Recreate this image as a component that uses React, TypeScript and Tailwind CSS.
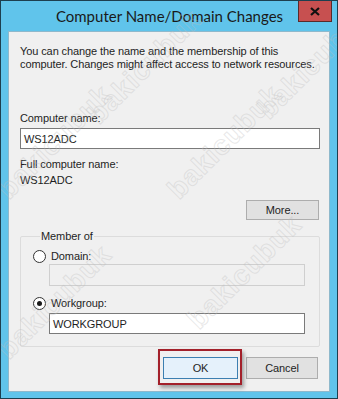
import React from "react";

const font = "font-['Liberation_Sans',Arial,sans-serif]";

function Radio({ checked }: { checked?: boolean }) {
  return (
    <span className="w-[13px] h-[13px] rounded-full border border-[#333] bg-white flex items-center justify-center shrink-0">
      {checked && <span className="w-[5px] h-[5px] rounded-full bg-[#1a1a1a]" />}
    </span>
  );
}

function Watermark({ className }: { className: string }) {
  return (
    <span
      className={
        "absolute text-[28px] font-bold tracking-[1px] text-transparent [-webkit-text-stroke:1px_rgba(190,190,190,0.35)] -rotate-45 pointer-events-none select-none font-['Liberation_Sans',sans-serif] " +
        className
      }
    >
      bakicubuk
    </span>
  );
}

export default function App() {
  return (
    <div className={`w-[338px] h-[399px] bg-[#60c4eb] border border-[#1d3f4f] flex flex-col relative overflow-hidden ${font}`}>
      <div className="h-[30px] pt-[1px] flex items-center justify-center text-[15px] font-['Lato',sans-serif] text-[#1a1a1a] pl-[1px]">
        Computer Name/Domain Changes
      </div>
      <button className="absolute top-0 right-[5px] w-[34px] h-[21px] bg-[#c75050] border border-[#5a2a2a] border-t-0 flex items-center justify-center">
        <svg width="10" height="9" viewBox="0 0 10 9">
          <path d="M1 1 L9 8 M9 1 L1 8" stroke="#111" strokeWidth="2.2" />
        </svg>
      </button>
      <div className="mx-[7px] mb-[6px] flex-1 bg-[#f0f0f0] border border-[#8fb9cc] pl-[11px] pr-[9px] flex flex-col text-[11px] tracking-[-0.1px] leading-[14px] text-[#1e1e1e]">
        <p className="mt-[13px] leading-[13px] whitespace-nowrap">
          You can change the name and the membership of this
          <br />
          computer. Changes might affect access to network resources.
        </p>
        <div className="mt-[40px]">Computer name:</div>
        <div className="mt-[3px] h-[21px] border border-[#7a7a7a] bg-white flex items-center px-[3px]">WS12ADC</div>
        <div className="mt-[8px]">Full computer name:</div>
        <div className="mt-[2px]">WS12ADC</div>
        <div className="flex justify-end mt-[13px] pr-[1px]">
          <button className="w-[73px] h-[20px] bg-[#e1e1e1] border border-[#adadad] leading-[14px] text-[#1e1e1e]">More...</button>
        </div>
        <fieldset className="mt-[9px] border border-[#dcdcdc] rounded-[2px] pl-[12px] pr-[14px] pb-[12px]">
          <legend className="ml-[7px] px-[1px] leading-[14px]">Member of</legend>
          <div className="mt-[6px] flex items-center gap-[5px] h-[14px]">
            <Radio />
            <span>Domain:</span>
          </div>
          <div className="mt-[1px] ml-[16px] h-[22px] border border-[#cfcfcf] bg-[#f0f0f0]" />
          <div className="mt-[10px] flex items-center gap-[5px] h-[14px]">
            <Radio checked />
            <span>Workgroup:</span>
          </div>
          <div className="mt-[3px] ml-[16px] h-[21px] border border-[#7a7a7a] bg-white flex items-center px-[3px]">WORKGROUP</div>
        </fieldset>
        <div className="mt-[10px] flex justify-end gap-[8px] pr-[2px]">
          <div className="relative">
            <button className="w-[75px] h-[22px] bg-[#e5f1fb] border border-[#3c7fb1] leading-[14px] text-[#1e1e1e]">OK</button>
            <span className="absolute left-[-5px] top-[-8px] w-[84px] h-[36px] border-2 border-[#a3202a] shadow-[2px_3px_4px_rgba(0,0,0,0.35)] pointer-events-none" />
          </div>
          <button className="w-[72px] h-[22px] bg-[#e1e1e1] border border-[#adadad] leading-[14px] text-[#1e1e1e]">Cancel</button>
        </div>
      </div>
      <Watermark className="left-[70px] top-[45px]" />
      <Watermark className="left-[240px] top-[40px]" />
      <Watermark className="left-[-20px] top-[120px]" />
      <Watermark className="left-[150px] top-[120px]" />
      <Watermark className="left-[-20px] top-[280px]" />
      <Watermark className="left-[170px] top-[250px]" />
    </div>
  );
}
